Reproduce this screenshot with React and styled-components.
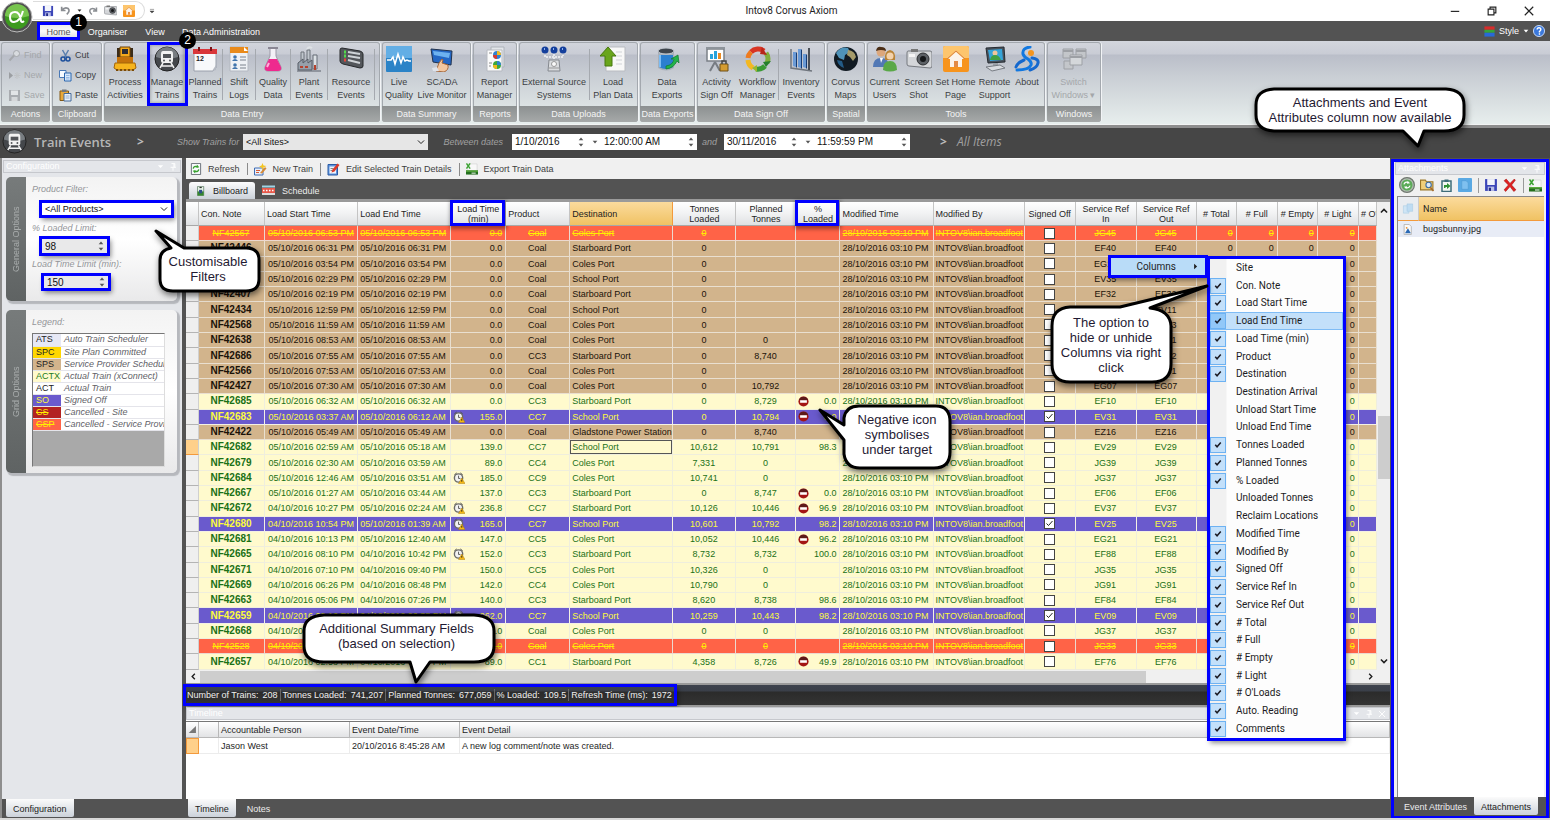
import { useState } from 'react';
import styled, { createGlobalStyle, css } from 'styled-components';

const GlobalStyle = createGlobalStyle`
    :root {
        --mark: #0000ff;
        --chrome: #535353;
        --panel: #e4e6ea;
        --ui: "Liberation Sans", sans-serif;
        --segoe: Roboto, "Open Sans", sans-serif;
    }
    * {
        box-sizing: border-box;
    }
    body {
        margin: 0;
        font-family: var(--ui);
        font-size: 9px;
        line-height: 12px;
        color: #1e1e1e;
        background: #fff;
    }
    button, input, select {
        font: inherit;
        color: inherit;
        border: 0;
        padding: 0;
        margin: 0;
        background: none;
    }
    svg {
        display: block;
        flex: none;
    }
`;

const marked = css`
    outline: 3px solid var(--mark);
    box-shadow: 2px 3px 5px 2px rgba(0, 0, 0, 0.45);
`;

const Page = styled.div`
    position: relative;
    display: flex;
    flex-direction: column;
    min-height: 100vh;
    overflow: hidden;
    border-bottom: 2px solid #d8d8d8;
`;

/* ---------- window top ---------- */

const TitleBar = styled.header`
    display: grid;
    grid-template-columns: 1fr auto 1fr;
    align-items: center;
    height: 21px;
    padding-left: 33px;
    background: #fff;
`;

const TitleStart = styled.div`
    display: flex;
    align-items: center;
    gap: 4px;
`;

const QuickAccess = styled.div`
    display: flex;
    align-items: center;
    gap: 6px;
    height: 19px;
    width: 112px;
    padding-left: 9px;
    border: 1px solid #dcdcdc;
    border-left: 0;
    border-radius: 0 10px 10px 0;
`;

const Title = styled.h1`
    margin: 0;
    font: 10px/12px var(--segoe);
    color: #222;
`;

const WindowButtons = styled.div`
    display: flex;
    justify-content: flex-end;
    gap: 27px;
    padding-right: 16px;
`;

const IconButton = styled.button`
    display: flex;
    align-items: center;
    justify-content: center;
`;

const Orb = styled.button`
    position: absolute;
    left: 1px;
    top: 1px;
    z-index: 3;
`;

const TabBar = styled.nav`
    display: flex;
    align-items: center;
    height: 20px;
    padding-left: 37px;
    background: var(--chrome);
`;

const RibbonTab = styled.button`
    width: ${p => p.$w}px;
    height: 18px;
    padding-top: 2px;
    color: #fff;
    ${p => p.$active && css`
        color: #555;
        background: linear-gradient(#e4e4e4, #fafafa 50%, #d3d6dc);
        outline: 3px solid var(--mark);
        outline-offset: -3px;
    `}
`;

const StyleArea = styled.div`
    display: flex;
    align-items: center;
    gap: 4px;
    margin-left: auto;
    padding-right: 5px;
    color: #fff;
`;

/* ---------- ribbon ---------- */

const Ribbon = styled.section`
    display: flex;
    gap: 2px;
    height: 84px;
    padding: 1px 0 2px 1px;
    border-bottom: 1px solid #f2f4f4;
    background: linear-gradient(#d3d6dd, #c9ccd5 13px, #babec9 14px, #c9ced4 35px, #e7eeed);
`;

const Group = styled.section`
    display: flex;
    flex-direction: column;
    min-width: ${p => p.$w}px;
    border-radius: 3px;
    overflow: hidden;
    box-shadow: inset 0 0 0 1px #a3a8ae, 1px 0 0 #f2f4f6;
`;

const GroupBody = styled.div`
    display: flex;
    flex: 1;
    ${p => p.$stack && css`
        flex-direction: column;
        justify-content: space-around;
        padding: 3px 0 1px 7px;
    `}
`;

const GroupTitle = styled.h2`
    margin: 0;
    height: 16px;
    line-height: 16px;
    text-align: center;
    font-size: 9px;
    font-weight: normal;
    color: #f4f4f4;
    background: linear-gradient(#8c9091, #a6a9a9);
`;

const BigButton = styled.button`
    display: flex;
    flex-direction: column;
    align-items: center;
    width: ${p => p.$w}px;
    padding-top: 4px;
    line-height: 13px;
    white-space: pre;
    color: ${p => p.$off ? '#a4a7aa' : '#3c3f43'};
    border-right: 1px solid transparent;
    ${p => p.$sep && css`
        border-image: linear-gradient(transparent 12%, #a5a9af 12%, #a5a9af 90%, transparent 90%) 1;
    `}
    svg {
        margin-bottom: 4px;
    }
    ${p => p.$marked && css`
        outline: 3px solid var(--mark);
        outline-offset: -3px;
        box-shadow: inset 0 0 3px 4px rgba(0, 0, 0, 0.2);
    `}
`;

const SmallButton = styled.button`
    display: flex;
    align-items: center;
    gap: 3px;
    color: ${p => p.$off ? '#a4a7aa' : '#3c3f43'};
`;

/* ---------- filter bar ---------- */

const FilterBar = styled.form`
    display: flex;
    align-items: center;
    height: 33px;
    padding: 0 0 3px 2px;
    border-top: 3px solid #8e8e8e;
    background: #464646;
    color: #a0a0a0;
    font-style: italic;
`;

const Heading = styled.h2`
    margin: 0 0 0 7px;
    width: 103px;
    font: 600 13px/16px "Open Sans", sans-serif;
    color: #b6b6b6;
`;

const Chevron = styled.span`
    width: ${p => p.$w}px;
    padding-left: ${p => p.$left || 0}px;
    font: bold 12px/14px "Open Sans", sans-serif;
    color: #bbb;
`;

const SelectBox = styled.span`
    position: relative;
    display: flex;
    width: ${p => p.$w}px;
    color: #111;
    font-style: normal;
    select {
        appearance: none;
        width: 100%;
        height: ${p => p.$h || 16}px;
        padding-left: 3px;
        background: ${p => p.$bg || '#e6e6e6'};
    }
    svg {
        position: absolute;
        right: 3px;
        top: ${p => p.$h ? 2 : 4}px;
        pointer-events: none;
    }
    ${p => p.$marked && marked}
`;

const Spinner = styled.span`
    display: flex;
    align-items: center;
    gap: 8px;
    width: ${p => p.$w}px;
    height: ${p => p.$h || 16}px;
    padding-right: 3px;
    background: ${p => p.$bg || '#fff'};
    color: #111;
    font-style: normal;
    font-size: 10px;
    input {
        flex: 1;
        min-width: 0;
        height: 100%;
        padding-left: 3px;
    }
    svg {
        color: #555;
    }
    ${p => p.$marked && marked}
`;

const BarLabel = styled.label`
    width: ${p => p.$w}px;
    padding-right: ${p => p.$right || 0}px;
    text-align: ${p => p.$right ? 'right' : 'left'};
    white-space: nowrap;
`;

const AllItems = styled.span`
    font: italic 12px/16px "Open Sans", sans-serif;
`;

/* ---------- workspace ---------- */

const Workspace = styled.div`
    display: flex;
    flex: 1;
    min-height: 0;
    background: var(--chrome);
`;

const Side = styled.aside`
    display: flex;
    flex-direction: column;
    width: 182px;
    border-left: 2px solid #8e8e8e;
    background: var(--panel);
`;

const PaneTitle = styled.h3`
    display: flex;
    flex: none;
    align-items: center;
    gap: 5px;
    height: 13px;
    margin: ${p => p.$m || '2px 1px 3px'};
    padding: 0 3px 0 2px;
    font-size: 9px;
    font-weight: normal;
    line-height: 11px;
    color: #fff;
    background: var(--panel);
    border: 1px solid #c6c8cd;
    span {
        flex: 1;
    }
`;

const Card = styled.section`
    display: flex;
    height: ${p => p.$h}px;
    margin: 1px 5px 8px 4px;
    border-radius: 5px;
    background: linear-gradient(#f3f3f3, #fff 50%, #e9e9ea);
    box-shadow: 2px 2px 1px 1px #b6b8bd;
    overflow: hidden;
`;

const CardSpine = styled.h4`
    margin: 0;
    width: 20px;
    line-height: 20px;
    text-align: center;
    writing-mode: vertical-rl;
    transform: rotate(180deg);
    font-weight: normal;
    font-size: 9px;
    color: #a9adad;
    background: linear-gradient(#5f6363, #777b7b);
`;

const CardBody = styled.div`
    flex: 1;
    min-width: 0;
    padding: 6px 4px 0 6px;
    label, p {
        display: block;
        margin: 0;
        font-style: italic;
        color: #94969a;
    }
`;

const Control = styled.div`
    padding: ${p => p.$pad};
`;

const Legend = styled.div`
    height: 134px;
    margin: 5px 8px 0 0;
    background: #a9a9a9;
    border: 1px solid #777;
    border-right-color: #ddd;
    border-bottom-color: #ddd;
    overflow: hidden;
`;

const LegendTable = styled.table`
    width: 100%;
    table-layout: fixed;
    border-collapse: collapse;
    td, th {
        height: 12px;
        padding: 0 0 0 3px;
        line-height: 11px;
        white-space: nowrap;
        overflow: hidden;
        text-align: left;
        font-weight: normal;
        border-bottom: 1px solid #e4e4ea;
    }
    td {
        color: #5f5f68;
        font-style: italic;
        background: #fff;
    }
`;

const LegendKey = styled.th`
    width: 28px;
    color: ${p => p.$fg};
    background: ${p => p.$bg};
    text-decoration: ${p => p.$strike ? 'line-through' : 'none'};
`;

const PaneTabs = styled.div`
    display: flex;
    flex: none;
    height: 19px;
    margin-top: auto;
    padding-left: ${p => p.$left || 0}px;
    background: var(--chrome);
`;

const PaneTab = styled.button`
    height: 18px;
    padding: 2px ${p => p.$pad || 7}px 0;
    border-radius: 0 0 2px 2px;
    white-space: nowrap;
    color: ${p => p.$active ? '#222' : '#ececec'};
    background: ${p => p.$active ? 'linear-gradient(#fbfbfb, #ccd2da)' : 'none'};
`;

const Main = styled.main`
    display: flex;
    flex-direction: column;
    flex: 1;
    min-width: 0;
    margin-left: 4px;
`;

const Toolbar = styled.div`
    display: flex;
    align-items: center;
    height: 21px;
    padding-left: 4px;
    background: #f0f0f0;
    border-top: 1px solid #fafafa;
`;

const ToolButton = styled.button`
    display: flex;
    align-items: center;
    gap: 6px;
    padding-right: ${p => p.$sep ? 7 : 0}px;
    margin-right: 6px;
    color: #3f3f3f;
    border-right: ${p => p.$sep ? '1px solid #8a8a8a' : '0'};
`;

const ViewTabs = styled.div`
    display: flex;
    align-items: flex-end;
    height: 23px;
    padding-left: 3px;
    border-bottom: 3px solid #9a9a9a;
`;

const ViewTab = styled.button`
    display: flex;
    align-items: center;
    gap: 7px;
    height: 17px;
    padding: 0 7px;
    border-radius: 3px 3px 0 0;
    color: ${p => p.$active ? '#222' : '#ececec'};
    background: ${p => p.$active ? 'linear-gradient(#fdfdfd, #ccd2da)' : 'none'};
`;

const GridArea = styled.div`
    display: grid;
    grid-template-columns: 1fr 13px;
    grid-template-rows: 1fr 13px;
    flex: 1;
    min-height: 0;
    background: #f0f0f0;
`;

const Grid = styled.table`
    width: 100%;
    height: 100%;
    table-layout: fixed;
    border-collapse: separate;
    border-spacing: 0;
    thead th {
        position: relative;
        height: 24px;
        padding: 0 2px;
        font-weight: normal;
        line-height: 10px;
        border-right: 1px solid #c4c4c4;
        border-bottom: 1px solid #a8a8a8;
        background: linear-gradient(#fff, #f1f2f3 50%, #dfe1e3);
    }
`;

const HeadCell = styled.th`
    && {
        text-align: ${p => p.$align || 'left'};
        white-space: pre;
        overflow: ${p => p.$cut ? 'hidden' : 'visible'};
        ${p => p.$hot && css`
            background: linear-gradient(#fbdb9d, #f0c263);
            border-right-color: #f39a3c;
        `}
    }
`;

const HeadMark = styled.span`
    position: absolute;
    inset: -2px 0 -1px -1px;
    border: 3px solid var(--mark);
    box-shadow: 1px 2px 4px 1px rgba(0, 0, 0, 0.4);
    pointer-events: none;
`;

const tones = {
    sps: { bg: '#d2b48c', fg: '#1a1208', line: '#e9dfd0' },
    actx: { bg: '#fffacd', fg: '#1a7016', line: '#efeedd' },
    so: { bg: '#6a5acd', fg: '#fbfb3c', line: '#f4f0e4' },
    csp: { bg: '#ff6347', fg: '#ffee00', line: '#ecd9cf' },
};

const Row = styled.tr`
    color: ${p => tones[p.$tone].fg};
    td {
        padding: 0 3px 0 2px;
        line-height: 12px;
        white-space: nowrap;
        overflow: hidden;
        background: ${p => tones[p.$tone].bg};
        border-right: 1px solid ${p => tones[p.$tone].line};
        border-bottom: 1px solid ${p => tones[p.$tone].line};
        text-decoration: ${p => p.$tone === 'csp' ? 'line-through' : 'none'};
    }
`;

const Cell = styled.td`
    text-align: ${p => p.$align || 'left'};
    ${p => p.$bold && css`
        font-weight: bold;
        font-size: 10px;
    `}
    ${p => p.$focus && css`
        box-shadow: inset 0 0 0 1px #555;
    `}
`;

const RowHead = styled.th`
    padding: 0;
    background: ${p => p.$hot ? '#ffd08a' : '#efefef'};
    border-right: 1px solid #d0d0d0;
    border-bottom: 1px solid ${p => p.$hot ? '#f39a3c' : '#b4b4b4'};
`;

const WithIcon = styled.span`
    display: flex;
    align-items: center;
    justify-content: space-between;
    b {
        font-weight: normal;
        margin-left: auto;
    }
`;

const Tick = styled.input`
    appearance: none;
    display: block;
    width: 11px;
    height: 11px;
    margin: 0 auto;
    border: 1px solid #444;
    background: #fff;
    &:checked {
        background: #fff url("data:image/svg+xml,%3Csvg xmlns='http://www.w3.org/2000/svg' viewBox='0 0 9 9'%3E%3Cpath d='M1.5 4.5l2 2 4-4.5' fill='none' stroke='%23222'/%3E%3C/svg%3E") center / 9px;
    }
`;

const VScroll = styled.div`
    display: flex;
    flex-direction: column;
    align-items: center;
    padding: 5px 0;
    i {
        width: 12px;
        height: 63px;
        margin: 201px 0 auto;
        background: #cdcdcd;
    }
`;

const HScroll = styled.div`
    display: flex;
    align-items: center;
    grid-column: 1 / -1;
    padding: 0 16px 0 4px;
    gap: 3px;
    i {
        flex: 0 1 946px;
        height: 12px;
        margin-right: auto;
        background: #cdcdcd;
    }
`;

const Status = styled.footer`
    height: 24px;
    border: solid #9a9a9a;
    border-width: 2px 0;
    background: linear-gradient(#3d424d, #3a3f49 30%, #2b2b2b 35%, #343434);
`;

const StatusList = styled.dl`
    display: inline-flex;
    align-items: center;
    height: 16px;
    margin: 2px 0 0;
    color: #f0f0f0;
    ${marked}
`;

const StatusItem = styled.div`
    display: flex;
    gap: 4px;
    padding: 0 2px;
    border-left: 1px solid #666;
    white-space: nowrap;
    &:first-child {
        border: 0;
        padding-left: 1px;
    }
    dd {
        margin: 0;
    }
`;

const TimelinePane = styled.section`
    display: flex;
    flex-direction: column;
    height: 111px;
    background: #fff;
`;

const TimelineTable = styled.table`
    width: 100%;
    table-layout: fixed;
    border-collapse: separate;
    border-spacing: 0;
    border-top: 1px solid #777;
    th, td {
        height: 16px;
        padding: 0 2px;
        text-align: left;
        white-space: nowrap;
        font-weight: normal;
        border-right: 1px solid #d8d8d8;
        border-bottom: 1px solid #d8d8d8;
    }
    thead th {
        background: linear-gradient(#fff, #e2e3e5);
        border-color: #b8b8b8;
    }
    td {
        border-color: #ececec;
    }
    td.hot {
        background: #ffd08a;
        border: 1px solid #f39a3c;
    }
`;

/* ---------- attachments ---------- */

const Attachments = styled.aside`
    display: flex;
    flex-direction: column;
    width: 158px;
    margin: 1px 1px -1px 1px;
    border: 3px solid var(--mark);
    background: #f0f0f0;
`;

const AttachTools = styled.div`
    display: flex;
    align-items: center;
    justify-content: space-between;
    height: 20px;
    padding: 0 4px 0 5px;
    hr {
        width: 1px;
        height: 15px;
        margin: 0;
        border: 0;
        background: #9a9a9a;
    }
`;

const FileArea = styled.div`
    flex: 1;
    margin: 1px 2px 0 3px;
    border: solid #888;
    border-width: 1px 0 0 1px;
    background: #fff;
`;

const FileTable = styled.table`
    width: 100%;
    table-layout: fixed;
    border-collapse: separate;
    border-spacing: 0;
    font: 9px/12px var(--segoe);
    th, td {
        padding: 0 4px;
        text-align: left;
        font-weight: normal;
    }
    th {
        height: 24px;
        background: linear-gradient(#fbdb9d, #f0c263);
        border-bottom: 1px solid #f39a3c;
    }
    th:first-child {
        background: #e9ecf0;
        border-right: 1px solid #ccc;
    }
    td {
        height: 16px;
        background: #e8ecf6;
    }
`;

/* ---------- overlays ---------- */

const Badge = styled.span`
    position: absolute;
    left: ${p => p.$x}px;
    top: ${p => p.$y}px;
    z-index: 4;
    width: 17px;
    height: 17px;
    border-radius: 50%;
    background: #000;
    color: #fff;
    text-align: center;
    font: 12px/17px "Liberation Sans", sans-serif;
`;

const Bubble = styled.div`
    position: absolute;
    left: ${p => p.$x}px;
    top: ${p => p.$y}px;
    z-index: 6;
    svg {
        overflow: visible;
        filter: drop-shadow(1px 3px 3px rgba(0, 0, 0, 0.55));
    }
    p {
        position: absolute;
        inset: ${p => p.$inset};
        margin: 0;
        text-align: center;
        white-space: pre;
        font: 13px/15px "Liberation Sans", sans-serif;
        color: #1f1a33;
    }
`;

const ContextItem = styled.button`
    position: absolute;
    left: 1111px;
    top: 258px;
    z-index: 5;
    display: flex;
    align-items: center;
    justify-content: flex-end;
    gap: 16px;
    width: 94px;
    height: 17px;
    padding-right: 6px;
    font: 10px/12px var(--segoe);
    background: #b9dcf8;
    ${marked}
`;

const ColumnMenu = styled.ul`
    position: absolute;
    left: 1210px;
    top: 259px;
    z-index: 5;
    display: flex;
    flex-direction: column;
    width: 133px;
    height: 479px;
    margin: 0;
    padding: 0;
    list-style: none;
    background: linear-gradient(90deg, #f1f1f1 16px, #fdfdfd 17px);
    ${marked}
    li {
        display: flex;
        flex: 1;
    }
`;

const ColumnToggle = styled.button`
    display: flex;
    align-items: center;
    flex: 1;
    gap: 10px;
    text-align: left;
    font: 10px/12px var(--segoe);
    color: #1c1c24;
    background: ${p => p.$hover ? '#c3e0fa' : 'none'};
    box-shadow: ${p => p.$hover ? 'inset 0 0 0 1px #7fbcf5' : 'none'};
    span {
        display: flex;
        align-items: center;
        justify-content: center;
        width: 16px;
        height: 16px;
        border: 1px solid ${p => p.$on ? '#6db2f2' : 'transparent'};
        background: ${p => p.$on ? p.$hover ? '#92c8f8' : '#c3e0fa' : 'none'};
    }
`;

/* ---------- icons ---------- */

const art = {
    process: <>
        <path d="M5 2h4v9H5zM17 2h4v9h-4z" fill="#3b2c1a" />
        <path d="M8 1h10v10H8z" fill="#f4a91c" stroke="#6d4308" />
        <path d="M10 3h6v5h-6z" fill="#2b2d35" />
        <path d="M5 11h16v6H5z" fill="#c4720b" />
        <path d="M3 17h20l1 5-3 2H5l-3-2z" fill="#f6b41d" stroke="#a2640a" />
        <path d="M4 24h2m2 0h2m2 0h2m2 0h2m2 0h2" stroke="#7a4b08" strokeWidth="2" />
    </>,
    train: <>
        <circle cx="13" cy="13" r="12" fill="#44474b" stroke="#222" />
        <path d="M2 11a11 10 0 0 1 22 0q-11 4-22 0z" fill="#8f9498" opacity=".7" />
        <path d="M9 5h8q2 0 2 3v7q0 2-2 2H9q-2 0-2-2V8q0-3 2-3z" fill="#f2f2f2" />
        <path d="M9 8h8v4H9z" fill="#515458" />
        <circle cx="10" cy="14.500" r="1" fill="#515458" /><circle cx="16" cy="14.500" r="1" fill="#515458" />
        <path d="M9 17l-3 5M17 17l3 5M8 20h10" stroke="#f2f2f2" strokeWidth="1.500" />
    </>,
    planned: <>
        <path d="M2 4h22v18l-3 3H2z" fill="#f8f9fb" stroke="#9aa0ab" />
        <path d="M1 3h24v5H1z" fill="#d9363a" />
        <path d="M7 1v4M19 1v4" stroke="#7b1518" strokeWidth="2" />
        <text x="4" y="15" fontSize="7" fontWeight="bold" fontFamily="Liberation Sans" fill="#222">12</text>
        <path d="M20 25l4-6v5z" fill="#b5bac3" />
    </>,
    shift: <>
        <path d="M4 1h14l4 4v20H4z" fill="#eef1f5" stroke="#b3b8c1" />
        <path d="M4 1h18v6H4z" fill="#e98a1a" /><path d="M18 1l4 4h-4z" fill="#fff" />
        <circle cx="9" cy="11" r="1.800" fill="#4175ad" /><path d="M6 15q3-4 6 0z" fill="#4175ad" />
        <circle cx="9" cy="19" r="1.800" fill="#4175ad" /><path d="M6 23q3-4 6 0z" fill="#4175ad" />
        <path d="M14 11h6M14 14h6M14 19h6M14 22h6" stroke="#7b828d" />
    </>,
    quality: <>
        <path d="M10 2h6v8l5 11q1 4-3 4H8q-4 0-3-4l5-11z" fill="#f3f0f6" stroke="#9c99a6" />
        <path d="M9 13h8l4 8q1 4-3 4H8q-4 0-3-4z" fill="#ee2a8e" />
        <path d="M8 2h10" stroke="#8a8794" strokeWidth="2" /><path d="M9 17l-2 4" stroke="#ffb1db" strokeWidth="2" />
    </>,
    plant: <>
        <path d="M5 6h3v15H5zM11 4h3v17h-3z" fill="#c0c6cd" stroke="#6d737b" />
        <path d="M2 17l5-4v4l5-4v4l4-3v10H2z" fill="#97a0aa" stroke="#565d66" />
        <path d="M17 9h4v14h-4z" fill="#dbe0e5" stroke="#666d76" /><path d="M11 3q2-3 5-1" stroke="#dfe3e6" fill="none" strokeWidth="2" />
        <path d="M4 21h3M9 21h3M19 19v5" stroke="#b6422d" strokeWidth="2" /><path d="M1 25h24" stroke="#5b616a" />
    </>,
    resource: <>
        <path d="M4 2l18 3q3 1 3 3v12q0 2-3 2L5 18q-3-1-3-3V4q0-2 2-2z" fill="#53565b" stroke="#26282b" />
        <path d="M6 6h2M6 10h2" stroke="#52d94b" strokeWidth="3" /><path d="M6 14h2" stroke="#e5463a" strokeWidth="3" />
        <path d="M10 6l12 2M10 10l12 2M10 14l12 3" stroke="#cfd3d7" strokeWidth="2" />
    </>,
    live: <>
        <rect width="26" height="26" rx="1" fill="#2b83c7" /><rect width="26" height="12" fill="#63aee5" />
        <path d="M1 14h4l2-3 2 7 3-10 3 9 2-6 2 4 2-1 2 1h2" fill="none" stroke="#fff" strokeWidth="1.500" />
    </>,
    scada: <>
        <path d="M2 3l21 2-1 14L4 16z" fill="#2467c4" stroke="#21324d" /><path d="M4 5l17 2-1 5L5 9z" fill="#6db2f0" />
        <path d="M7 25l3-8 3-4 1 1-1 3 6 2q1 5-4 7z" fill="#f3c7a0" stroke="#a5683c" />
        <path d="M3 22l5-1 2 4H4z" fill="#dfe3ea" />
    </>,
    report: <>
        <path d="M9 1h13v20H9z" fill="#e3e6ea" stroke="#aeb3ba" /><path d="M5 4h15v21H5z" fill="#fafafa" stroke="#b6bac1" />
        <circle cx="15" cy="9" r="4" fill="#2e82d3" /><path d="M15 9V5a4 4 0 0 1 4 4z" fill="#f2b91b" /><path d="M15 9v4a4 4 0 0 1-4-4z" fill="#d53c32" />
        <circle cx="15" cy="19" r="4" fill="#3da83a" /><path d="M15 19v-4a4 4 0 0 1 4 4z" fill="#2e82d3" /><path d="M15 19v4a4 4 0 0 1-4-4z" fill="#f2b91b" />
        <path d="M7 7h3M7 17h3M7 20h2" stroke="#888" />
    </>,
    external: <>
        <circle cx="4" cy="4" r="3.500" fill="#143f9c" /><circle cx="13" cy="4" r="3.500" fill="#143f9c" /><circle cx="22" cy="4" r="3.500" fill="#143f9c" />
        <path d="M3 3h1M12 3h1M21 3h1" stroke="#8fb4f4" strokeWidth="2" />
        <path d="M4 9v2h18V9M13 8v6" stroke="#e4e6ea" fill="none" strokeWidth="2" strokeDasharray="2 1" />
        <path d="M8 14h10l1 11H7z" fill="#dadcdf" stroke="#84888e" /><circle cx="13" cy="18" r="2.500" fill="#fafafa" stroke="#999" /><path d="M8 22h10" stroke="#999" />
    </>,
    load: <>
        <path d="M6 1h19v24H6z" fill="#f8f8f8" stroke="#b9bcc1" /><path d="M16 6h6M16 10h6M16 14h6M16 18h6" stroke="#d0d3d7" />
        <path d="M8 1l8 9h-4v10H5V10H0z" fill="#69a51c" stroke="#47780e" />
    </>,
    exports: <>
        <path d="M4 5v17q8 5 16 0V5z" fill="#a8b0b9" /><path d="M5 9v12q7 4 14 0V9z" fill="#2b7fd0" />
        <ellipse cx="12" cy="5" rx="8" ry="3" fill="#3f454d" stroke="#c3c9d0" /><path d="M6 9v12" stroke="#7cbcf4" strokeWidth="2" />
        <path d="M12 20q7-1 8-7h-3l7-4 1 8-2-2q-3 7-11 8z" fill="#23b34a" stroke="#0e7b2b" strokeWidth=".7" />
    </>,
    activity: <>
        <path d="M3 3h17v12H3z" fill="#fff" stroke="#7b8087" strokeWidth="1.500" /><path d="M2 2h19" stroke="#8e949b" strokeWidth="2" />
        <path d="M6 13V8h3v5M10 13V5h3v8" fill="#28a3dd" /><path d="M14 13V7h3v6" fill="#eb8a22" />
        <path d="M11 16l-5 9M11 16l5 9" stroke="#777c83" strokeWidth="2" />
        <path d="M16 18h8v7h-8z" fill="#d49c31" stroke="#6e5019" /><path d="M18 18v-3h4v3" fill="none" stroke="#454545" strokeWidth="1.500" />
    </>,
    workflow: <>
        <g fill="none" strokeWidth="5">
            <path d="M6 6a10 10 0 0 1 13-1" stroke="#d83524" /><path d="M21 7a10 10 0 0 1 1 10" stroke="#7fae3c" />
            <path d="M20 20a10 10 0 0 1-9 3" stroke="#3b9a35" /><path d="M8 22a10 10 0 0 1-5-8" stroke="#f3b821" /><path d="M3 12a10 10 0 0 1 3-6" stroke="#ef7b1f" />
        </g>
        <path d="M17 1l5 8-7-1z" fill="#b8261a" /><path d="M26 15l-5 6-3-5z" fill="#267f2d" /><path d="M12 19v7l-5-4z" fill="#9bb82c" />
    </>,
    inventory: <>
        <path d="M3 3v19l21 3" fill="none" stroke="#70767e" strokeWidth="1.500" />
        <path d="M5 6h3v15l-3-1zM10 3h3v19l-3-1zM15 8h3v14l-3-1z" fill="#6a9ad6" /><path d="M8 6l1 1v15l-1-1zM13 3l1 1v19l-1-1zM18 8l1 1v14l-1-1z" fill="#173c73" />
        <path d="M21 2v22" stroke="#4b5058" strokeWidth="2" />
    </>,
    maps: <>
        <circle cx="13" cy="13" r="12" fill="#111a22" /><path d="M3 7Q8 0 15 2l2 4-5 3-1 5-5-2z" fill="#4f93b9" />
        <path d="M15 4q7 1 8 7l-3 4-3-4-3-2z" fill="#a59b6b" /><path d="M4 14l5 1 2 7q-6-2-7-8z" fill="#235b86" />
    </>,
    users: <>
        <circle cx="9" cy="6" r="4.500" fill="#dca77c" /><path d="M4 5q1-5 5-4 5 0 5 4-5-2-10 0z" fill="#4b2e17" />
        <path d="M1 21q0-9 8-9t8 9z" fill="#5278b5" /><path d="M8 12l1 5 2-5z" fill="#fff" />
        <path d="M13 14q-1-9 5-10 6 1 5 10z" fill="#b98336" /><circle cx="18" cy="10" r="3.500" fill="#f3d2ac" />
        <path d="M11 24q0-9 7-9t7 9q-7 3-14 0z" fill="#5aa847" />
    </>,
    camera: <>
        <path d="M2 5h22q2 0 2 2v13q0 2-2 2L3 20q-2 0-2-2V7q0-2 1-2z" fill="#d4d6d9" stroke="#75797e" /><path d="M5 3h7v3H5z" fill="#777" />
        <circle cx="17" cy="13" r="6" fill="#5c6065" stroke="#2c2e31" /><circle cx="17" cy="13" r="3" fill="#151719" /><path d="M3 8h6v3H3z" fill="#f5f5f5" />
    </>,
    home: <>
        <rect width="26" height="26" rx="2" fill="#f7941d" /><path d="M0 2q0-2 2-2h22q2 0 2 2v10H0z" fill="#fdc56d" />
        <path d="M13 6l8 7h-2v8H7v-8H5z" fill="#fbf3ea" /><path d="M11 15h4v6h-4z" fill="#e38a45" /><path d="M4 13l9-8 9 8" fill="none" stroke="#d98144" />
    </>,
    remote: <>
        <path d="M4 2l18-1 1 15-17 1z" fill="#49525c" stroke="#252a30" /><path d="M6 4l14-1 1 11-13 1z" fill="#36a4d9" />
        <circle cx="13" cy="7" r="2.500" fill="#f0c69a" /><path d="M8 14q1-5 5-5t6 5z" fill="#40a043" />
        <path d="M11 17h5v3h-5z" fill="#9aa0a7" /><path d="M4 21l14-2 5 3-13 3z" fill="#dadde1" stroke="#777c83" />
    </>,
    about: <>
        <g fill="none" strokeLinecap="round">
            <path d="M16 1Q8 2 9 8q1 3 5 5 4 3 3 6-2 5-14 5" stroke="#1278e0" strokeWidth="3" />
            <path d="M10 14q-7 3-8 7M18 12q7 1 6 5-1 5-8 7" stroke="#1568cd" strokeWidth="3" />
        </g>
        <circle cx="17" cy="7" r="3" fill="#f5951d" />
    </>,
    windows: <g fill="#c3c6ca" stroke="#9da0a5">
        <path d="M2 3h10v9H2zM15 3h10v9H15zM3 15h9v8H3z" /><path d="M9 9h12v10H9z" fill="#d4d7da" /><path d="M2 5h10M15 5h10M9 11h12" strokeWidth="2" />
    </g>,
    find: <><circle cx="17" cy="9" r="6" fill="#d8dbdf" stroke="#a5a8ac" strokeWidth="2" /><path d="M12 13L3 23" stroke="#a5a8ac" strokeWidth="4" /></>,
    fresh: <><path d="M2 6l8 7-8 7z" fill="#9b9ea2" /><path d="M18 6v14M12 13h13M14 8l9 10M23 8l-9 10" stroke="#c0c3c6" strokeWidth="2" /></>,
    saveOff: <><path d="M2 2h22v22H2z" fill="#a9acb0" /><path d="M6 3h14v9H6z" fill="#e2e4e6" /><path d="M7 16h12v8H7z" fill="#d5d7d9" /></>,
    save: <><path d="M2 2h22v22H2z" fill="#3c46b8" /><path d="M6 2h14v11H6z" fill="#f3f5fb" /><path d="M7 16h12v8H7z" fill="#b9bfe8" /><path d="M9 18h4v6H9z" fill="#222a86" /></>,
    cut: <><path d="M7 2l8 14M19 2l-8 14" stroke="#5a7fae" strokeWidth="3" /><circle cx="8" cy="20" r="4" fill="none" stroke="#1c4f9c" strokeWidth="3" /><circle cx="18" cy="20" r="4" fill="none" stroke="#1c4f9c" strokeWidth="3" /></>,
    copy: <><path d="M1 3h13v14H1z" fill="#f6faff" stroke="#4a79b6" strokeWidth="2" /><path d="M11 8h13v16H11z" fill="#d6e7fb" stroke="#2b66ae" strokeWidth="2" /><path d="M14 13h7M14 17h7M14 20h7" stroke="#5b8cc8" /></>,
    paste: <><path d="M2 4h17v19H2z" fill="#e9a93a" stroke="#845813" strokeWidth="2" /><path d="M6 1h9v5H6z" fill="#72767c" /><path d="M10 9h14v15H10z" fill="#eaf2fb" stroke="#456a99" strokeWidth="2" /><path d="M13 14h8M13 18h8" stroke="#456a99" /></>,
    undo: <path d="M4 4v9h9M5 12q6-8 14-4 6 6-3 14" fill="none" stroke="#8b8e93" strokeWidth="4" />,
    redo: <path d="M22 4v9h-9M21 12Q15 4 7 8q-6 6 3 14" fill="none" stroke="#8b8e93" strokeWidth="4" />,
    refresh: <><path d="M3 1h20v24H3z" fill="#f7f9fb" stroke="#656b74" strokeWidth="2" /><path d="M7 12q1-6 9-4M19 14q-1 6-9 4" fill="none" stroke="#39a22f" strokeWidth="3" /><path d="M15 3l5 6-6 2zM11 23l-5-6 6-2z" fill="#39a22f" /></>,
    add: <><path d="M1 10h17v14H1z" fill="#e8effa" stroke="#3e6cb4" strokeWidth="2" /><path d="M4 15h8M4 19h6" stroke="#d45b36" strokeWidth="2" /><path d="M12 20L22 8l3 3-9 10z" fill="#d88a35" /><path d="M17 0l2 5 6 1-6 3-2 5-2-5-5-2 5-2z" fill="#f5c622" /></>,
    edit: <><path d="M2 3h19v21H2z" fill="#5d94dd" stroke="#2b5ba4" strokeWidth="2" /><path d="M5 7h13v14H5z" fill="#f0f5fc" /><path d="M7 11h6M7 15h4" stroke="#888" strokeWidth="2" /><path d="M9 19l2-6L21 1l4 3-10 13z" fill="#d93a2a" /></>,
    excel: <><path d="M4 2h20v22H4z" fill="#f8f8f8" stroke="#c4c4c4" /><path d="M1 1l8 11M9 1L1 12" stroke="#39a22f" strokeWidth="3" /><path d="M0 16h26v9H0z" fill="#236f1d" /><path d="M0 16h26v3H0z" fill="#5cab3f" /><path d="M12 22h9" stroke="#fff" strokeWidth="2" /></>,
    billboard: <><path d="M4 1h16v24H4z" fill="#e7f3e6" stroke="#62806a" strokeWidth="2" /><path d="M4 14h16v11H4z" fill="#35872e" /><path d="M8 10h8v9H8z" fill="#2e4c8c" /><path d="M9 4h6" stroke="#333" strokeWidth="3" /></>,
    schedule: <><path d="M0 3h26v4H0z" fill="#9fd4e4" /><path d="M0 8h26v10H0z" fill="#e8584a" /><path d="M2 13h3m3 0h3m3 0h3m3 0h3" stroke="#fff" strokeWidth="3" /><path d="M0 20h26" stroke="#ddd" strokeWidth="4" /></>,
    clock: <><circle cx="12" cy="13" r="9" fill="#f2f2f2" stroke="#6a6a6a" strokeWidth="3" /><path d="M3 6l5-4M16 2l5 4M12 8v6h4" stroke="#555" strokeWidth="2" fill="none" /><path d="M19 13l7 12H12z" fill="#f5b916" stroke="#a87808" /><path d="M19 17v4" stroke="#222" strokeWidth="2" /></>,
    negative: <><circle cx="13" cy="13" r="12" fill="#a31515" /><path d="M2 9a12 12 0 0 1 22 0q-11 5-22 0z" fill="#5c1a1a" /><path d="M5 10h16v6H5z" fill="#fff" /></>,
    sync: <><circle cx="13" cy="13" r="12" fill="#b4bdb4" stroke="#6f776f" strokeWidth="2" /><circle cx="13" cy="13" r="9" fill="#5cab58" /><path d="M8 12q2-5 7-3M18 14q-2 5-7 3" fill="none" stroke="#fff" strokeWidth="2" /><path d="M14 6l4 4-5 1zM12 20l-4-4 5-1z" fill="#fff" /></>,
    folder: <><path d="M1 4h9l2 3h12v15H1z" fill="#f0cf7a" stroke="#9a7626" strokeWidth="2" /><circle cx="16" cy="13" r="5" fill="#dbeaf7" stroke="#3b6ca3" strokeWidth="2" /><path d="M19 17l6 7" stroke="#a76b2c" strokeWidth="3" /></>,
    clip: <><path d="M4 4h18v21H4z" fill="#f4f8f4" stroke="#3e6c79" strokeWidth="3" /><path d="M9 1h8v5H9z" fill="#3e6c79" /><path d="M8 18v-6h6V8l7 6-7 6v-4h-3v2z" fill="#2f9235" /></>,
    page: <><rect width="26" height="26" rx="2" fill="#5aa9e3" /><path d="M7 5h8l4 4v12H7z" fill="#7fc0ef" stroke="#4b97d0" /></>,
    remove: <path d="M2 5l4-3 7 8 8-8 2 2-7 9 8 9-4 3-7-9-8 9-3-3 8-9z" fill="#e01f1f" stroke="#9c1111" />,
    files: <><path d="M3 6h12v16H3z" fill="#cfe5f5" stroke="#9cc4e0" /><path d="M11 2h12v16H11z" fill="#bfdcf2" stroke="#9cc4e0" /></>,
    image: <><path d="M5 1h12l5 5v19H5z" fill="#fafafa" stroke="#b0b0b0" strokeWidth="2" /><path d="M7 22l7-12 7 12z" fill="#2b69b4" /><circle cx="11" cy="9" r="2" fill="#e88e2d" /></>,
    styleIcon: <><path d="M1 1h24v8H1z" fill="#d82c2c" /><path d="M1 9h24v7H1z" fill="#35a53a" /><path d="M1 16h24v9H1z" fill="#2869d8" /></>,
    help: <><circle cx="13" cy="13" r="12" fill="#3a78dc" stroke="#cfe0fb" strokeWidth="2" /><path d="M9 10q0-4 4-4t4 4q0 2-3 4v2M14 18v3" fill="none" stroke="#fff" strokeWidth="3" /></>,
    caret: <path d="M3 8h20L13 19z" fill="currentColor" />,
    caretUp: <path d="M3 18h20L13 7z" fill="currentColor" />,
    caretRight: <path d="M8 3v20l11-10z" fill="currentColor" />,
    down: <path d="M3 8l10 10L23 8" fill="none" stroke="currentColor" strokeWidth="3" />,
    up: <path d="M3 18L13 8l10 10" fill="none" stroke="currentColor" strokeWidth="5" />,
    downBold: <path d="M3 8l10 10L23 8" fill="none" stroke="currentColor" strokeWidth="5" />,
    left: <path d="M18 3L8 13l10 10" fill="none" stroke="currentColor" strokeWidth="5" />,
    right: <path d="M8 3l10 10L8 23" fill="none" stroke="currentColor" strokeWidth="5" />,
    pin: <path d="M8 2h11v12h3M5 14h16M13 14v11M16 3v11" fill="none" stroke="currentColor" strokeWidth="3" />,
    close: <path d="M3 3l20 20M23 3L3 23" stroke="currentColor" strokeWidth="3" />,
    check: <path d="M4 12l6 7L22 5" fill="none" stroke="currentColor" strokeWidth="5" />,
    minimise: <path d="M2 14h22" stroke="#222" strokeWidth="3" />,
    restore: <path d="M3 8h15v15H3zM8 8V3h15v15h-5" fill="none" stroke="#222" strokeWidth="3" />,
    shut: <path d="M2 2l22 22M24 2L2 24" stroke="#222" strokeWidth="3" />,
    corner: <path d="M23 3v20H2z" fill="#777" />,
    more: <path d="M4 6h18M4 13h18l-9 9z" fill="#444" stroke="#444" strokeWidth="2" />,
};

const Icon = ({ name, size = 13 }) => (
    <svg width={size} height={size} viewBox="0 0 26 26" aria-hidden="true">{art[name]}</svg>
);

/* ---------- data ---------- */

const ribbonGroups = [
    { title: 'Data Entry', w: 276, items: [
        ['process', 'Process\nActivities', 43],
        ['train', 'Manage\nTrains', 41, 'marked'],
        ['planned', 'Planned\nTrains', 35, 'sep'],
        ['shift', 'Shift\nLogs', 33, 'sep'],
        ['quality', 'Quality\nData', 35, 'sep'],
        ['plant', 'Plant\nEvents', 37, 'sep'],
        ['resource', 'Resource\nEvents', 47, 'sep'],
    ] },
    { title: 'Data Summary', w: 89, items: [['live', 'Live\nQuality', 35], ['scada', 'SCADA\nLive Monitor', 51]] },
    { title: 'Reports', w: 44, items: [['report', 'Report\nManager', 44]] },
    { title: 'Data Uploads', w: 119, items: [['external', 'External Source\nSystems', 71, 'sep'], ['load', 'Load\nPlan Data', 47]] },
    { title: 'Data Exports', w: 55, items: [['exports', 'Data\nExports', 55]] },
    { title: 'Data Sign Off', w: 128, items: [
        ['activity', 'Activity\nSign Off', 40],
        ['workflow', 'Workflow\nManager', 42, 'sep'],
        ['inventory', 'Inventory\nEvents', 45],
    ] },
    { title: 'Spatial', w: 38, items: [['maps', 'Corvus\nMaps', 38]] },
    { title: 'Tools', w: 178, items: [
        ['users', 'Current\nUsers', 36],
        ['camera', 'Screen\nShot', 32],
        ['home', 'Set Home\nPage', 42],
        ['remote', 'Remote\nSupport', 36],
        ['about', 'About', 29],
    ] },
    { title: 'Windows', w: 54, items: [['windows', 'Switch\nWindows ▾', 54, 'off']] },
];

const legend = [
    ['ATS', 'Auto Train Scheduler', '#e6e8f5', '#222'],
    ['SPC', 'Site Plan Committed', '#ffd700', '#222'],
    ['SPS', 'Service Provider Scheduled', '#d2b48c', '#222'],
    ['ACTX', 'Actual Train (xConnect)', '#fffacd', '#237a1e'],
    ['ACT', 'Actual Train', '#fff', '#222'],
    ['SO', 'Signed Off', '#6a5acd', '#fbfb3c'],
    ['CS', 'Cancelled - Site', '#b22222', '#ffee00'],
    ['CSP', 'Cancelled - Service Provider', '#ff6347', '#ffee00'],
];

const gridColumns = [
    ['', 13], ['Con. Note', 66], ['Load Start Time', 93], ['Load End Time', 93],
    ['Load Time\n(min)', 55, 'center', 'marked'], ['Product', 64], ['Destination', 103, 'left', 'hot'],
    ['Tonnes\nLoaded', 63, 'center'], ['Planned\nTonnes', 60, 'center'], ['%\nLoaded', 44, 'center', 'marked'],
    ['Modified Time', 93], ['Modified By', 91], ['Signed Off', 51, 'center'],
    ['Service Ref\nIn', 61, 'center'], ['Service Ref\nOut', 60, 'center'], ['# Total', 40, 'center'],
    ['# Full', 41, 'center'], ['# Empty', 40, 'center'], ['# Light', 41, 'center'], ["# O'Loads", 18, 'left', 'cut'],
];

// tone, note, start, end, minutes, product, destination, loaded, planned, percent, ref, late
const trains = [
    ['csp', 'NF42567', '05/10/2016 06:53 PM', '05/10/2016 06:53 PM', '0.0', 'Coal', 'Coles Port', '0', '', '', 'JG45'],
    ['sps', 'NF42446', '05/10/2016 06:31 PM', '05/10/2016 06:31 PM', '0.0', 'Coal', 'Starboard Port', '0', '', '', 'EF40'],
    ['sps', 'NF42445', '05/10/2016 03:54 PM', '05/10/2016 03:54 PM', '0.0', 'Coal', 'Coles Port', '0', '', '', 'EG11'],
    ['sps', 'NF42433', '05/10/2016 02:29 PM', '05/10/2016 02:29 PM', '0.0', 'Coal', 'School Port', '0', '', '', 'EV35'],
    ['sps', 'NF42407', '05/10/2016 02:19 PM', '05/10/2016 02:19 PM', '0.0', 'Coal', 'Starboard Port', '0', '', '', 'EF32'],
    ['sps', 'NF42434', '05/10/2016 12:59 PM', '05/10/2016 12:59 PM', '0.0', 'Coal', 'School Port', '0', '', '', 'EV11'],
    ['sps', 'NF42568', '05/10/2016 11:59 AM', '05/10/2016 11:59 AM', '0.0', 'Coal', 'Coles Port', '0', '', '', 'JG43'],
    ['sps', 'NF42638', '05/10/2016 08:53 AM', '05/10/2016 08:53 AM', '0.0', 'Coal', 'Coles Port', '0', '0', '', 'JG41'],
    ['sps', 'NF42686', '05/10/2016 07:55 AM', '05/10/2016 07:55 AM', '0.0', 'CC3', 'Starboard Port', '0', '8,740', '', 'EF12'],
    ['sps', 'NF42566', '05/10/2016 07:53 AM', '05/10/2016 07:53 AM', '0.0', 'Coal', 'Coles Port', '0', '', '', 'JG41'],
    ['sps', 'NF42427', '05/10/2016 07:30 AM', '05/10/2016 07:30 AM', '0.0', 'Coal', 'Coles Port', '0', '10,792', '', 'EG07'],
    ['actx', 'NF42685', '05/10/2016 06:32 AM', '05/10/2016 06:32 AM', '0.0', 'CC3', 'Starboard Port', '0', '8,729', '0.0', 'EF10'],
    ['so', 'NF42683', '05/10/2016 03:37 AM', '05/10/2016 06:12 AM', '155.0', 'CC7', 'School Port', '0', '10,794', '0.0', 'EV31', true],
    ['sps', 'NF42422', '05/10/2016 05:49 AM', '05/10/2016 05:49 AM', '0.0', 'Coal', 'Gladstone Power Station', '0', '8,740', '', 'EZ16'],
    ['actx', 'NF42682', '05/10/2016 02:59 AM', '05/10/2016 05:18 AM', '139.0', 'CC7', 'School Port', '10,612', '10,791', '98.3', 'EV29'],
    ['actx', 'NF42679', '05/10/2016 02:30 AM', '05/10/2016 03:59 AM', '89.0', 'CC4', 'Coles Port', '7,331', '0', '', 'JG39'],
    ['actx', 'NF42684', '05/10/2016 12:46 AM', '05/10/2016 03:51 AM', '185.0', 'CC9', 'Coles Port', '10,741', '0', '', 'JG37', true],
    ['actx', 'NF42667', '05/10/2016 01:27 AM', '05/10/2016 03:44 AM', '137.0', 'CC3', 'Starboard Port', '0', '8,747', '0.0', 'EF06'],
    ['actx', 'NF42672', '04/10/2016 10:27 PM', '05/10/2016 02:24 AM', '236.8', 'CC7', 'Starboard Port', '10,126', '10,446', '96.9', 'EV37', true],
    ['so', 'NF42680', '04/10/2016 10:54 PM', '05/10/2016 01:39 AM', '165.0', 'CC7', 'School Port', '10,601', '10,792', '98.2', 'EV25', true],
    ['actx', 'NF42681', '04/10/2016 10:13 PM', '05/10/2016 12:40 AM', '147.0', 'CC5', 'Coles Port', '10,052', '10,446', '96.2', 'EG21'],
    ['actx', 'NF42665', '04/10/2016 08:10 PM', '04/10/2016 10:42 PM', '152.0', 'CC3', 'Starboard Port', '8,732', '8,732', '100.0', 'EF88', true],
    ['actx', 'NF42671', '04/10/2016 07:10 PM', '04/10/2016 09:40 PM', '150.0', 'CC5', 'Coles Port', '10,326', '0', '', 'JG35'],
    ['actx', 'NF42669', '04/10/2016 06:26 PM', '04/10/2016 08:48 PM', '142.0', 'CC4', 'Coles Port', '10,790', '0', '', 'JG91'],
    ['actx', 'NF42663', '04/10/2016 05:06 PM', '04/10/2016 07:26 PM', '140.0', 'CC3', 'Starboard Port', '8,620', '8,738', '98.6', 'EF84'],
    ['so', 'NF42659', '04/10/2016 02:16 PM', '04/10/2016 06:38 PM', '262.0', 'CC7', 'School Port', '10,259', '10,443', '98.2', 'EV09', true],
    ['actx', 'NF42668', '04/10/2016 03:20 PM', '04/10/2016 03:20 PM', '0.0', 'Coal', 'Coles Port', '0', '0', '', 'JG37'],
    ['csp', 'NF42528', '04/10/2016 03:00 PM', '04/10/2016 03:00 PM', '0.0', 'Coal', 'Coles Port', '0', '0', '', 'JG33'],
    ['actx', 'NF42657', '04/10/2016 02:58 PM', '04/10/2016 04:27 PM', '89.0', 'CC1', 'Starboard Port', '4,358', '8,726', '49.9', 'EF76'],
];

const summary = [
    ['Number of Trains:', '208'],
    ['Tonnes Loaded:', '741,207'],
    ['Planned Tonnes:', '677,059'],
    ['% Loaded:', '109.5'],
    ['Refresh Time (ms):', '1972'],
];

const menuColumns = [
    'Site', 'Con. Note', 'Load Start Time', 'Load End Time', 'Load Time (min)', 'Product', 'Destination',
    'Destination Arrival', 'Unload Start Time', 'Unload End Time', 'Tonnes Loaded', 'Planned Tonnes', '% Loaded',
    'Unloaded Tonnes', 'Reclaim Locations', 'Modified Time', 'Modified By', 'Signed Off', 'Service Ref In',
    'Service Ref Out', '# Total', '# Full', '# Empty', '# Light', "# O'Loads", 'Auto. Reading', 'Comments',
];

const hiddenColumns = ['Site', 'Destination Arrival', 'Unload Start Time', 'Unload End Time', 'Unloaded Tonnes', 'Reclaim Locations'];

const selectedNote = 'NF42682';

/* ---------- parts ---------- */

const Callout = ({ x, y, w, h, d, inset, children }) => (
    <Bubble $x={x} $y={y} $inset={inset}>
        <svg width={w} height={h} viewBox={`0 0 ${w} ${h}`}>
            <path d={d} fill="#fff" stroke="#000" strokeWidth="3" strokeLinejoin="round" />
        </svg>
        <p>{children}</p>
    </Bubble>
);

const SpinArrows = () => (
    <span>
        <Icon name="caretUp" size={6} />
        <Icon name="caret" size={6} />
    </span>
);

const DateField = ({ label, value, w, drop }) => (
    <Spinner $w={w}>
        <input aria-label={label} defaultValue={value} />
        <SpinArrows />
        {drop && <IconButton type="button" aria-label="Open calendar"><Icon name="caret" size={6} /></IconButton>}
    </Spinner>
);

const TrainRow = ({ train }) => {
    const [tone, note, start, end, minutes, product, destination, loaded, planned, percent, ref, late] = train;
    const selected = note === selectedNote;
    const under = percent !== '' && Number(percent) < 98;

    return (
        <Row $tone={tone}>
            <RowHead $hot={selected} aria-label={note} />
            <Cell $align="center" $bold={tone !== 'csp'}>{note}</Cell>
            <Cell $align="right">{start}</Cell>
            <Cell>{end}</Cell>
            <Cell><WithIcon>{late && <Icon name="clock" size={12} />}<b>{minutes}</b></WithIcon></Cell>
            <Cell $align="center">{product}</Cell>
            <Cell $focus={selected}>{destination}</Cell>
            <Cell $align="center">{loaded}</Cell>
            <Cell $align="center">{planned}</Cell>
            <Cell><WithIcon>{under && <Icon name="negative" size={11} />}<b>{percent}</b></WithIcon></Cell>
            <Cell>28/10/2016 03:10 PM</Cell>
            <Cell>INTOV8\ian.broadfoot</Cell>
            <Cell><Tick type="checkbox" aria-label={`${note} signed off`} defaultChecked={tone === 'so'} /></Cell>
            <Cell $align="center">{ref}</Cell>
            <Cell $align="center">{ref}</Cell>
            <Cell $align="right">0</Cell>
            <Cell $align="right">0</Cell>
            <Cell $align="right">0</Cell>
            <Cell $align="right">0</Cell>
            <Cell />
        </Row>
    );
};

const Sidebar = () => (
    <Side>
        <PaneTitle><span>Configuration</span><Icon name="caret" size={7} /><Icon name="pin" size={8} /></PaneTitle>
        <Card $h={124}>
            <CardSpine>General Options</CardSpine>
            <CardBody>
                <label htmlFor="product">Product Filter:</label>
                <Control $pad="8px 0 7px 10px">
                    <SelectBox $w={129} $h={12} $bg="#fff" $marked>
                        <select id="product"><option>&lt;All Products&gt;</option></select>
                        <Icon name="down" size={8} />
                    </SelectBox>
                </Control>
                <label htmlFor="loaded">% Loaded Limit:</label>
                <Control $pad="5px 0 5px 10px">
                    <Spinner $w={65} $h={14} $bg="#e9e9ea" $marked><input id="loaded" defaultValue="98" /><SpinArrows /></Spinner>
                </Control>
                <label htmlFor="limit">Load Time Limit (min):</label>
                <Control $pad="6px 0 0 12px">
                    <Spinner $w={64} $h={12} $bg="#e9e9ea" $marked><input id="limit" defaultValue="150" /><SpinArrows /></Spinner>
                </Control>
            </CardBody>
        </Card>
        <Card $h={163}>
            <CardSpine>Grid Options</CardSpine>
            <CardBody>
                <p>Legend:</p>
                <Legend>
                    <LegendTable>
                        <tbody>
                            {legend.map(([key, text, bg, fg]) => (
                                <tr key={key}>
                                    <LegendKey $bg={bg} $fg={fg} $strike={key === 'CS' || key === 'CSP'}>{key}</LegendKey>
                                    <td>{text}</td>
                                </tr>
                            ))}
                        </tbody>
                    </LegendTable>
                </Legend>
            </CardBody>
        </Card>
        <PaneTabs $left={4}><PaneTab $active>Configuration</PaneTab></PaneTabs>
    </Side>
);

const App = () => {
    const [hidden, setHidden] = useState(hiddenColumns);

    const toggle = (name) => {
        setHidden(hidden.includes(name) ? hidden.filter(n => n !== name) : [...hidden, name]);
    };

    return (
        <Page>
            <GlobalStyle />
            <Orb aria-label="Application menu">
                <svg width="33" height="33" viewBox="0 0 33 33">
                    <circle cx="16" cy="16" r="15" fill="#4e4e4e" stroke="#bdbdbd" />
                    <circle cx="16" cy="16" r="12" fill="#3c9a1e" />
                    <path d="M4 15a12 12 0 0 1 24 0q-12 4-24 0z" fill="#77c44e" />
                    <path d="M22 10q-3 11-9 11-4 0-4-5t5-5q5 0 6 9 1 2 3 0" fill="none" stroke="#fff" strokeWidth="2" />
                </svg>
            </Orb>
            <TitleBar>
                <TitleStart>
                    <QuickAccess>
                        <IconButton aria-label="Save"><Icon name="save" size={12} /></IconButton>
                        <IconButton aria-label="Undo"><Icon name="undo" size={11} /></IconButton>
                        <IconButton aria-label="Undo list"><Icon name="caret" size={5} /></IconButton>
                        <IconButton aria-label="Redo"><Icon name="redo" size={10} /></IconButton>
                        <IconButton aria-label="Screen shot"><Icon name="camera" size={13} /></IconButton>
                        <IconButton aria-label="Home page"><Icon name="home" size={12} /></IconButton>
                    </QuickAccess>
                    <IconButton aria-label="Customise"><Icon name="more" size={6} /></IconButton>
                </TitleStart>
                <Title>Intov8 Corvus Axiom</Title>
                <WindowButtons>
                    <IconButton aria-label="Minimise"><Icon name="minimise" size={10} /></IconButton>
                    <IconButton aria-label="Restore"><Icon name="restore" size={10} /></IconButton>
                    <IconButton aria-label="Close"><Icon name="shut" size={10} /></IconButton>
                </WindowButtons>
            </TitleBar>
            <TabBar>
                <RibbonTab $active $w={43}>Home</RibbonTab>
                <RibbonTab $w={55}>Organiser</RibbonTab>
                <RibbonTab $w={40}>View</RibbonTab>
                <RibbonTab $w={92}>Data Administration</RibbonTab>
                <StyleArea>
                    <Icon name="styleIcon" size={11} />
                    <button>Style</button>
                    <Icon name="caret" size={6} />
                    <IconButton aria-label="Help"><Icon name="help" size={12} /></IconButton>
                </StyleArea>
            </TabBar>
            <Badge $x={70} $y={14}>1</Badge>
            <Badge $x={179} $y={32}>2</Badge>

            <Ribbon>
                <Group $w={49}>
                    <GroupBody $stack>
                        <SmallButton $off><Icon name="find" />Find</SmallButton>
                        <SmallButton $off><Icon name="fresh" />New</SmallButton>
                        <SmallButton $off><Icon name="saveOff" />Save</SmallButton>
                    </GroupBody>
                    <GroupTitle>Actions</GroupTitle>
                </Group>
                <Group $w={50}>
                    <GroupBody $stack>
                        <SmallButton><Icon name="cut" />Cut</SmallButton>
                        <SmallButton><Icon name="copy" />Copy</SmallButton>
                        <SmallButton><Icon name="paste" />Paste</SmallButton>
                    </GroupBody>
                    <GroupTitle>Clipboard</GroupTitle>
                </Group>
                {ribbonGroups.map(group => (
                    <Group key={group.title} $w={group.w}>
                        <GroupBody>
                            {group.items.map(([icon, label, w, flag]) => (
                                <BigButton
                                    key={icon}
                                    $w={w}
                                    $sep={flag === 'sep'}
                                    $off={flag === 'off'}
                                    $marked={flag === 'marked'}
                                >
                                    <Icon name={icon} size={26} />
                                    {label}
                                </BigButton>
                            ))}
                        </GroupBody>
                        <GroupTitle>{group.title}</GroupTitle>
                    </Group>
                ))}
            </Ribbon>

            <FilterBar>
                <Icon name="train" size={25} />
                <Heading>Train Events</Heading>
                <Chevron $w={40}>&gt;</Chevron>
                <BarLabel htmlFor="site" $w={66}>Show Trains for</BarLabel>
                <SelectBox $w={185}>
                    <select id="site"><option>&lt;All Sites&gt;</option></select>
                    <Icon name="down" size={8} />
                </SelectBox>
                <BarLabel as="span" $w={84} $right={9}>Between dates</BarLabel>
                <DateField label="From date" value="1/10/2016" w={89} drop />
                <DateField label="From time" value="12:00:00 AM" w={96} />
                <BarLabel as="span" $w={27} $right={7}>and</BarLabel>
                <DateField label="To date" value="30/11/2016" w={90} drop />
                <DateField label="To time" value="11:59:59 PM" w={96} />
                <Chevron $w={47} $left={30}>&gt;</Chevron>
                <AllItems>All Items</AllItems>
            </FilterBar>

            <Workspace>
                <Sidebar />
                <Main>
                    <Toolbar>
                        <ToolButton $sep><Icon name="refresh" size={12} />Refresh</ToolButton>
                        <ToolButton $sep><Icon name="add" />New Train</ToolButton>
                        <ToolButton $sep><Icon name="edit" />Edit Selected Train Details</ToolButton>
                        <ToolButton><Icon name="excel" size={12} />Export Train Data</ToolButton>
                    </Toolbar>
                    <ViewTabs>
                        <ViewTab $active><Icon name="billboard" size={10} />Billboard</ViewTab>
                        <ViewTab><Icon name="schedule" size={13} />Schedule</ViewTab>
                    </ViewTabs>
                    <GridArea>
                        <Grid>
                            <colgroup>{gridColumns.map(([name, w]) => <col key={name} width={w} />)}</colgroup>
                            <thead>
                                <tr>
                                    {gridColumns.map(([name, , align, flag]) => (
                                        <HeadCell key={name} $align={align} $hot={flag === 'hot'} $cut={flag === 'cut'}>
                                            {name}
                                            {flag === 'marked' && <HeadMark />}
                                        </HeadCell>
                                    ))}
                                </tr>
                            </thead>
                            <tbody>
                                {trains.map(train => <TrainRow key={train[1]} train={train} />)}
                            </tbody>
                        </Grid>
                        <VScroll><Icon name="up" size={8} /><i /><Icon name="downBold" size={8} /></VScroll>
                        <HScroll><Icon name="left" size={7} /><i /><Icon name="right" size={7} /></HScroll>
                    </GridArea>
                    <Status>
                        <StatusList>
                            {summary.map(([name, value]) => (
                                <StatusItem key={name}><dt>{name}</dt><dd>{value}</dd></StatusItem>
                            ))}
                        </StatusList>
                    </Status>
                    <TimelinePane>
                        <PaneTitle $m="0 0 1px"><span>Timeline</span><Icon name="caret" size={7} /><Icon name="pin" size={8} /><Icon name="close" size={8} /></PaneTitle>
                        <TimelineTable>
                            <colgroup><col width="13" /><col width="20" /><col width="131" /><col width="110" /><col /></colgroup>
                            <thead>
                                <tr><th><Icon name="corner" size={9} /></th><th /><th>Accountable Person</th><th>Event Date/Time</th><th>Event Detail</th></tr>
                            </thead>
                            <tbody>
                                <tr><td className="hot" /><td /><td>Jason West</td><td>20/10/2016 8:45:28 AM</td><td>A new log comment/note was created.</td></tr>
                            </tbody>
                        </TimelineTable>
                        <PaneTabs $left={2}>
                            <PaneTab $active>Timeline</PaneTab>
                            <PaneTab $pad={11}>Notes</PaneTab>
                        </PaneTabs>
                    </TimelinePane>
                </Main>
                <Attachments>
                    <PaneTitle $m="0 1px"><span>Attachments</span><Icon name="caret" size={7} /><Icon name="pin" size={8} /></PaneTitle>
                    <AttachTools>
                        <IconButton aria-label="Sync"><Icon name="sync" size={16} /></IconButton>
                        <IconButton aria-label="Browse"><Icon name="folder" size={14} /></IconButton>
                        <IconButton aria-label="Paste file"><Icon name="clip" size={13} /></IconButton>
                        <IconButton aria-label="Open"><Icon name="page" size={14} /></IconButton>
                        <hr />
                        <IconButton aria-label="Save file"><Icon name="save" size={14} /></IconButton>
                        <IconButton aria-label="Delete file"><Icon name="remove" size={14} /></IconButton>
                        <hr />
                        <IconButton aria-label="Export files"><Icon name="excel" size={13} /></IconButton>
                    </AttachTools>
                    <FileArea>
                        <FileTable>
                            <colgroup><col width="21" /><col /></colgroup>
                            <thead><tr><th><Icon name="files" size={12} /></th><th>Name</th></tr></thead>
                            <tbody><tr><td><Icon name="image" size={11} /></td><td>bugsbunny.jpg</td></tr></tbody>
                        </FileTable>
                    </FileArea>
                    <PaneTabs $left={3}>
                        <PaneTab>Event Attributes</PaneTab>
                        <PaneTab $active>Attachments</PaneTab>
                    </PaneTabs>
                </Attachments>
            </Workspace>

            <ContextItem>Columns<Icon name="caretRight" size={7} /></ContextItem>
            <ColumnMenu>
                {menuColumns.map(name => {
                    const on = !hidden.includes(name);
                    return (
                        <li key={name}>
                            <ColumnToggle
                                role="menuitemcheckbox"
                                aria-checked={on}
                                $on={on}
                                $hover={name === 'Load End Time'}
                                onClick={() => toggle(name)}
                            >
                                <span>{on && <Icon name="check" size={8} />}</span>
                                {name}
                            </ColumnToggle>
                        </li>
                    );
                })}
            </ColumnMenu>

            <Callout x={1254} y={87} w={212} h={62} inset="8px 0 0 0"
                d="M20 2H192Q210 3 210 18V28Q210 44 190 44H170L164 59L149 44H20Q2 43 2 28V18Q2 3 20 2Z">
                {'Attachments and Event\nAttributes column now available'}
            </Callout>
            <Callout x={154} y={228} w={107} h={65} inset="26px 0 0 1px"
                d="M2 3L30 20H92Q105 20 105 32V51Q105 63 92 63H19Q6 63 6 51V32Q6 22 17 20Z">
                {'Customisable\nFilters'}
            </Callout>
            <Callout x={818} y={408} w={134} h={62} inset="4px 0 0 24px"
                d="M2 2L26 17V10Q28 -2 41 -2H118Q132 -2 132 14V44Q132 60 116 60H42Q28 60 26 46V32Z">
                {'Negative icon\nsymbolises\nunder target'}
            </Callout>
            <Callout x={1050} y={284} w={160} h={100} inset="31px 38px 0 0"
                d="M157 2L100 24Q120 26 121 42V80Q121 98 102 98H20Q2 98 2 80V42Q2 24 20 23H70Z">
                {'The option to\nhide or unhide\nColumns via right\nclick'}
            </Callout>
            <Callout x={302} y={613} w={194} h={72} inset="8px 5px 0 0"
                d="M22 2H172Q192 3 192 18V33Q192 49 172 49H128L114 69L108 49H22Q2 49 2 33V18Q2 3 22 2Z">
                {'Additional Summary Fields\n(based on selection)'}
            </Callout>
        </Page>
    );
};

export default App;
